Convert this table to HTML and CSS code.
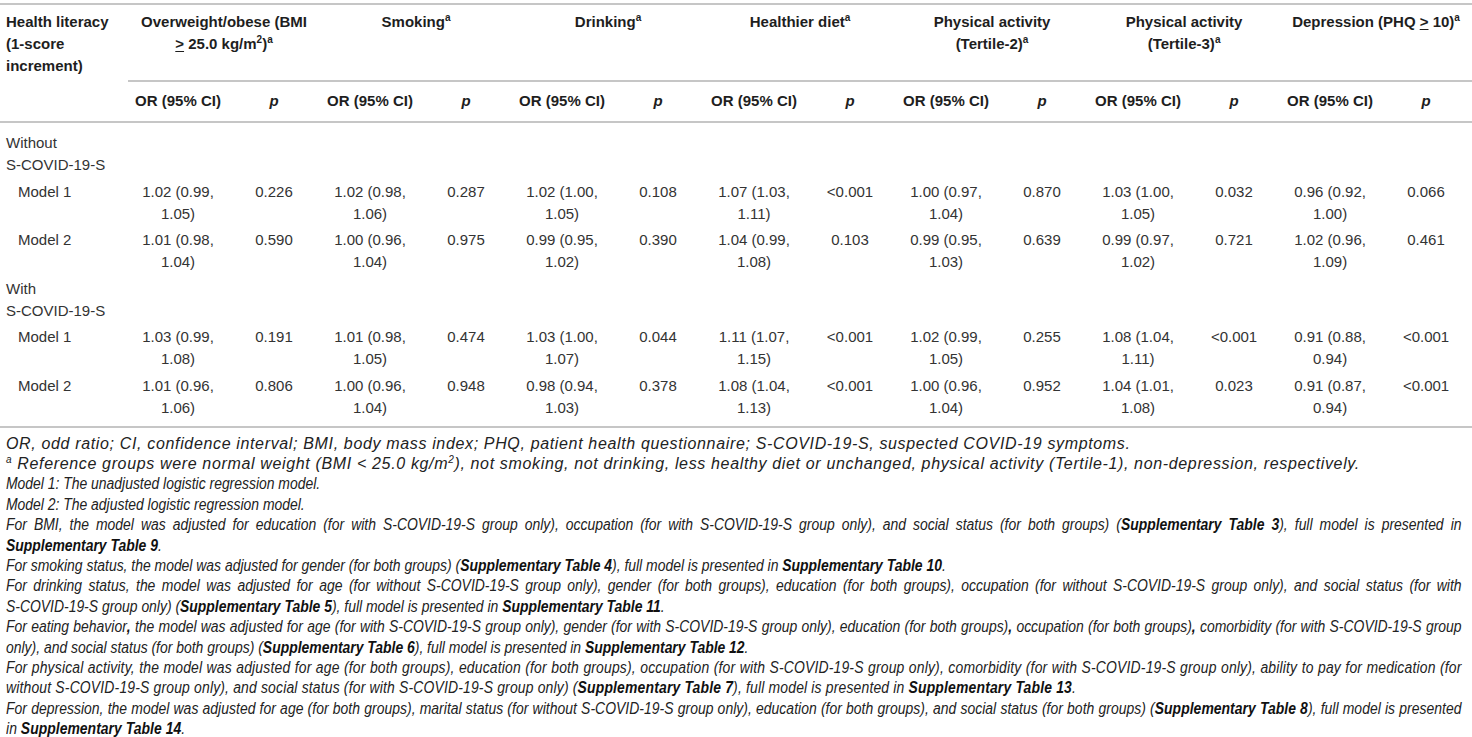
FILE: index.html
```html
<!DOCTYPE html>
<html lang="en">
<head>
<meta charset="utf-8">
<title>Health literacy table</title>
<link rel="stylesheet" href="styles.css">
</head>
<body>
<div class="page">
<table class="tbl">
  <colgroup>
    <col class="c-label">
    <col class="c-or"><col class="c-p">
    <col class="c-or"><col class="c-p">
    <col class="c-or"><col class="c-p">
    <col class="c-or"><col class="c-p">
    <col class="c-or"><col class="c-p">
    <col class="c-or"><col class="c-p">
    <col class="c-or"><col class="c-p">
  </colgroup>
  <thead>
    <tr class="h1">
      <th class="lbl">Health literacy (1-score increment)</th>
      <th colspan="2">Overweight/obese (BMI <span class="nw"><u>&gt;</u> 25.0 kg/m<sup>2</sup>)<sup>a</sup></span></th>
      <th colspan="2">Smoking<sup>a</sup></th>
      <th colspan="2">Drinking<sup>a</sup></th>
      <th colspan="2">Healthier diet<sup>a</sup></th>
      <th colspan="2">Physical activity <span class="nw">(Tertile-2)<sup>a</sup></span></th>
      <th colspan="2">Physical activity <span class="nw">(Tertile-3)<sup>a</sup></span></th>
      <th colspan="2">Depression (PHQ <u>&gt;</u> 10)<sup>a</sup></th>
    </tr>
    <tr class="h2">
      <th class="blank"></th>
      <th>OR (95% CI)</th><th><i>p</i></th>
      <th>OR (95% CI)</th><th><i>p</i></th>
      <th>OR (95% CI)</th><th><i>p</i></th>
      <th>OR (95% CI)</th><th><i>p</i></th>
      <th>OR (95% CI)</th><th><i>p</i></th>
      <th>OR (95% CI)</th><th><i>p</i></th>
      <th>OR (95% CI)</th><th><i>p</i></th>
    </tr>
  </thead>
  <tbody>
    <tr class="grp first">
      <td class="lbl">Without <span class="nw">S-COVID-19-S</span></td>
      <td></td><td></td><td></td><td></td><td></td><td></td><td></td><td></td><td></td><td></td><td></td><td></td><td></td><td></td>
    </tr>
    <tr>
      <td class="lbl model">Model 1</td>
      <td>1.02 (0.99, 1.05)</td><td>0.226</td>
      <td>1.02 (0.98, 1.06)</td><td>0.287</td>
      <td>1.02 (1.00, 1.05)</td><td>0.108</td>
      <td>1.07 (1.03, 1.11)</td><td>&lt;0.001</td>
      <td>1.00 (0.97, 1.04)</td><td>0.870</td>
      <td>1.03 (1.00, 1.05)</td><td>0.032</td>
      <td>0.96 (0.92, 1.00)</td><td>0.066</td>
    </tr>
    <tr>
      <td class="lbl model">Model 2</td>
      <td>1.01 (0.98, 1.04)</td><td>0.590</td>
      <td>1.00 (0.96, 1.04)</td><td>0.975</td>
      <td>0.99 (0.95, 1.02)</td><td>0.390</td>
      <td>1.04 (0.99, 1.08)</td><td>0.103</td>
      <td>0.99 (0.95, 1.03)</td><td>0.639</td>
      <td>0.99 (0.97, 1.02)</td><td>0.721</td>
      <td>1.02 (0.96, 1.09)</td><td>0.461</td>
    </tr>
    <tr class="grp">
      <td class="lbl">With <span class="nw">S-COVID-19-S</span></td>
      <td></td><td></td><td></td><td></td><td></td><td></td><td></td><td></td><td></td><td></td><td></td><td></td><td></td><td></td>
    </tr>
    <tr>
      <td class="lbl model">Model 1</td>
      <td>1.03 (0.99, 1.08)</td><td>0.191</td>
      <td>1.01 (0.98, 1.05)</td><td>0.474</td>
      <td>1.03 (1.00, 1.07)</td><td>0.044</td>
      <td>1.11 (1.07, 1.15)</td><td>&lt;0.001</td>
      <td>1.02 (0.99, 1.05)</td><td>0.255</td>
      <td>1.08 (1.04, 1.11)</td><td>&lt;0.001</td>
      <td>0.91 (0.88, 0.94)</td><td>&lt;0.001</td>
    </tr>
    <tr class="last">
      <td class="lbl model">Model 2</td>
      <td>1.01 (0.96, 1.06)</td><td>0.806</td>
      <td>1.00 (0.96, 1.04)</td><td>0.948</td>
      <td>0.98 (0.94, 1.03)</td><td>0.378</td>
      <td>1.08 (1.04, 1.13)</td><td>&lt;0.001</td>
      <td>1.00 (0.96, 1.04)</td><td>0.952</td>
      <td>1.04 (1.01, 1.08)</td><td>0.023</td>
      <td>0.91 (0.87, 0.94)</td><td>&lt;0.001</td>
    </tr>
  </tbody>
</table>

<div class="notes">
  <p class="wide">OR, odd ratio; CI, confidence interval; BMI, body mass index; PHQ, patient health questionnaire; S-COVID-19-S, suspected COVID-19 symptoms.</p>
  <p class="wide"><sup>a</sup> Reference groups were normal weight (BMI &lt; 25.0 kg/m<sup>2</sup>), not smoking, not drinking, less healthy diet or unchanged, physical activity (Tertile-1), non-depression, respectively.</p>
  <div class="narrow">
    <p>Model 1: The unadjusted logistic regression model.</p>
    <p>Model 2: The adjusted logistic regression model.</p>
    <p>For BMI, the model was adjusted for education (for with S-COVID-19-S group only), occupation (for with S-COVID-19-S group only), and social status (for both groups) (<b>Supplementary Table 3</b>), full model is presented in <b>Supplementary Table 9</b>.</p>
    <p>For smoking status, the model was adjusted for gender (for both groups) (<b>Supplementary Table 4</b>), full model is presented in <b>Supplementary Table 10</b>.</p>
    <p>For drinking status, the model was adjusted for age (for without S-COVID-19-S group only), gender (for both groups), education (for both groups), occupation (for without S-COVID-19-S group only), and social status (for with <span class="nw">S-COVID-19-S</span> group only) (<b>Supplementary Table 5</b>), full model is presented in <b>Supplementary Table 11</b>.</p>
    <p>For eating behavior<b>,</b> the model was adjusted for age (for with S-COVID-19-S group only), gender (for with S-COVID-19-S group only), education (for both groups)<b>,</b> occupation (for both groups)<b>,</b> comorbidity (for with <span class="nw">S-COVID-19-S</span> group only), and social status (for both groups) (<b>Supplementary Table 6</b>), full model is presented in <b>Supplementary Table 12</b>.</p>
    <p class="loose">For physical activity, the model was adjusted for age (for both groups), education (for both groups), occupation (for with S-COVID-19-S group only), comorbidity (for with S-COVID-19-S group only), ability to pay for medication (for without <span class="nw">S-COVID-19-S</span> group only), and social status (for with S-COVID-19-S group only) (<b>Supplementary Table 7</b>), full model is presented in <b>Supplementary Table 13</b>.</p>
    <p class="slight">For depression, the model was adjusted for age (for both groups), marital status (for without S-COVID-19-S group only), education (for both groups), and social status (for both groups) (<b>Supplementary Table 8</b>), full model is presented in <b>Supplementary Table 14</b>.</p>
  </div>
</div>
</div>
</body>
</html>
```
FILE: styles.css
```css
html, body {
  margin: 0;
  padding: 0;
  background: #ffffff;
  overflow: hidden;
}
.page {
  width: 1472px;
  font-family: "Liberation Sans", Arial, Helvetica, sans-serif;
  color: #222222;
}
.nw {
  white-space: nowrap;
}
.tbl {
  width: 1472px;
  table-layout: fixed;
  border-collapse: collapse;
  margin-top: 3px;
  font-size: 15px;
  line-height: 22px;
}
.c-label { width: 128px; }
.c-or { width: 100px; }
.c-p { width: 92px; }

.tbl thead tr.h1 th {
  border-top: 2px solid #c6c6c6;
}
.tbl th {
  font-weight: bold;
  text-align: center;
  vertical-align: top;
  color: #1e1e1e;
}
.tbl tr.h1 th {
  padding: 6px 6px 4px;
  border-bottom: 2px solid #c6c6c6;
}
.tbl tr.h1 th.lbl {
  text-align: left;
  border-bottom: none;
}
.tbl tr.h2 th {
  padding: 8px 4px 9px;
  border-bottom: 2px solid #c6c6c6;
}
.tbl sup {
  font-size: 10px;
  line-height: 0;
  vertical-align: 6px;
}
.tbl u {
  text-decoration-thickness: 1px;
  text-underline-offset: 2px;
}
.tbl td {
  padding: 2px 5px 2.5px;
  text-align: center;
  vertical-align: top;
  color: #333333;
}
.tbl td.lbl {
  text-align: left;
  padding-left: 6px;
  padding-right: 2px;
}
.tbl td.model {
  padding-left: 18px;
}
.tbl tr.first td {
  padding-top: 9px;
}
.tbl tr.last td {
  padding-bottom: 7px;
  border-bottom: 2px solid #c6c6c6;
}

.notes {
  padding: 6px 10px 0 6px;
  font-style: italic;
  line-height: 20.4px;
  color: #222222;
  text-align: justify;
  overflow: hidden;
}
.notes p {
  margin: 0;
}
.notes p.wide {
  font-size: 16px;
  letter-spacing: 0.65px;
  text-align: left;
}
.narrow {
  width: 1673px;
  font-size: 16px;
  transform: scaleX(0.87);
  transform-origin: 0 0;
}
.narrow p.loose {
  letter-spacing: 0.2px;
}
.narrow p.slight {
  letter-spacing: 0.04px;
}
.notes b {
  font-weight: bold;
  color: #111111;
}
.notes sup {
  font-size: 10px;
  line-height: 0;
  vertical-align: 6px;
}
```
